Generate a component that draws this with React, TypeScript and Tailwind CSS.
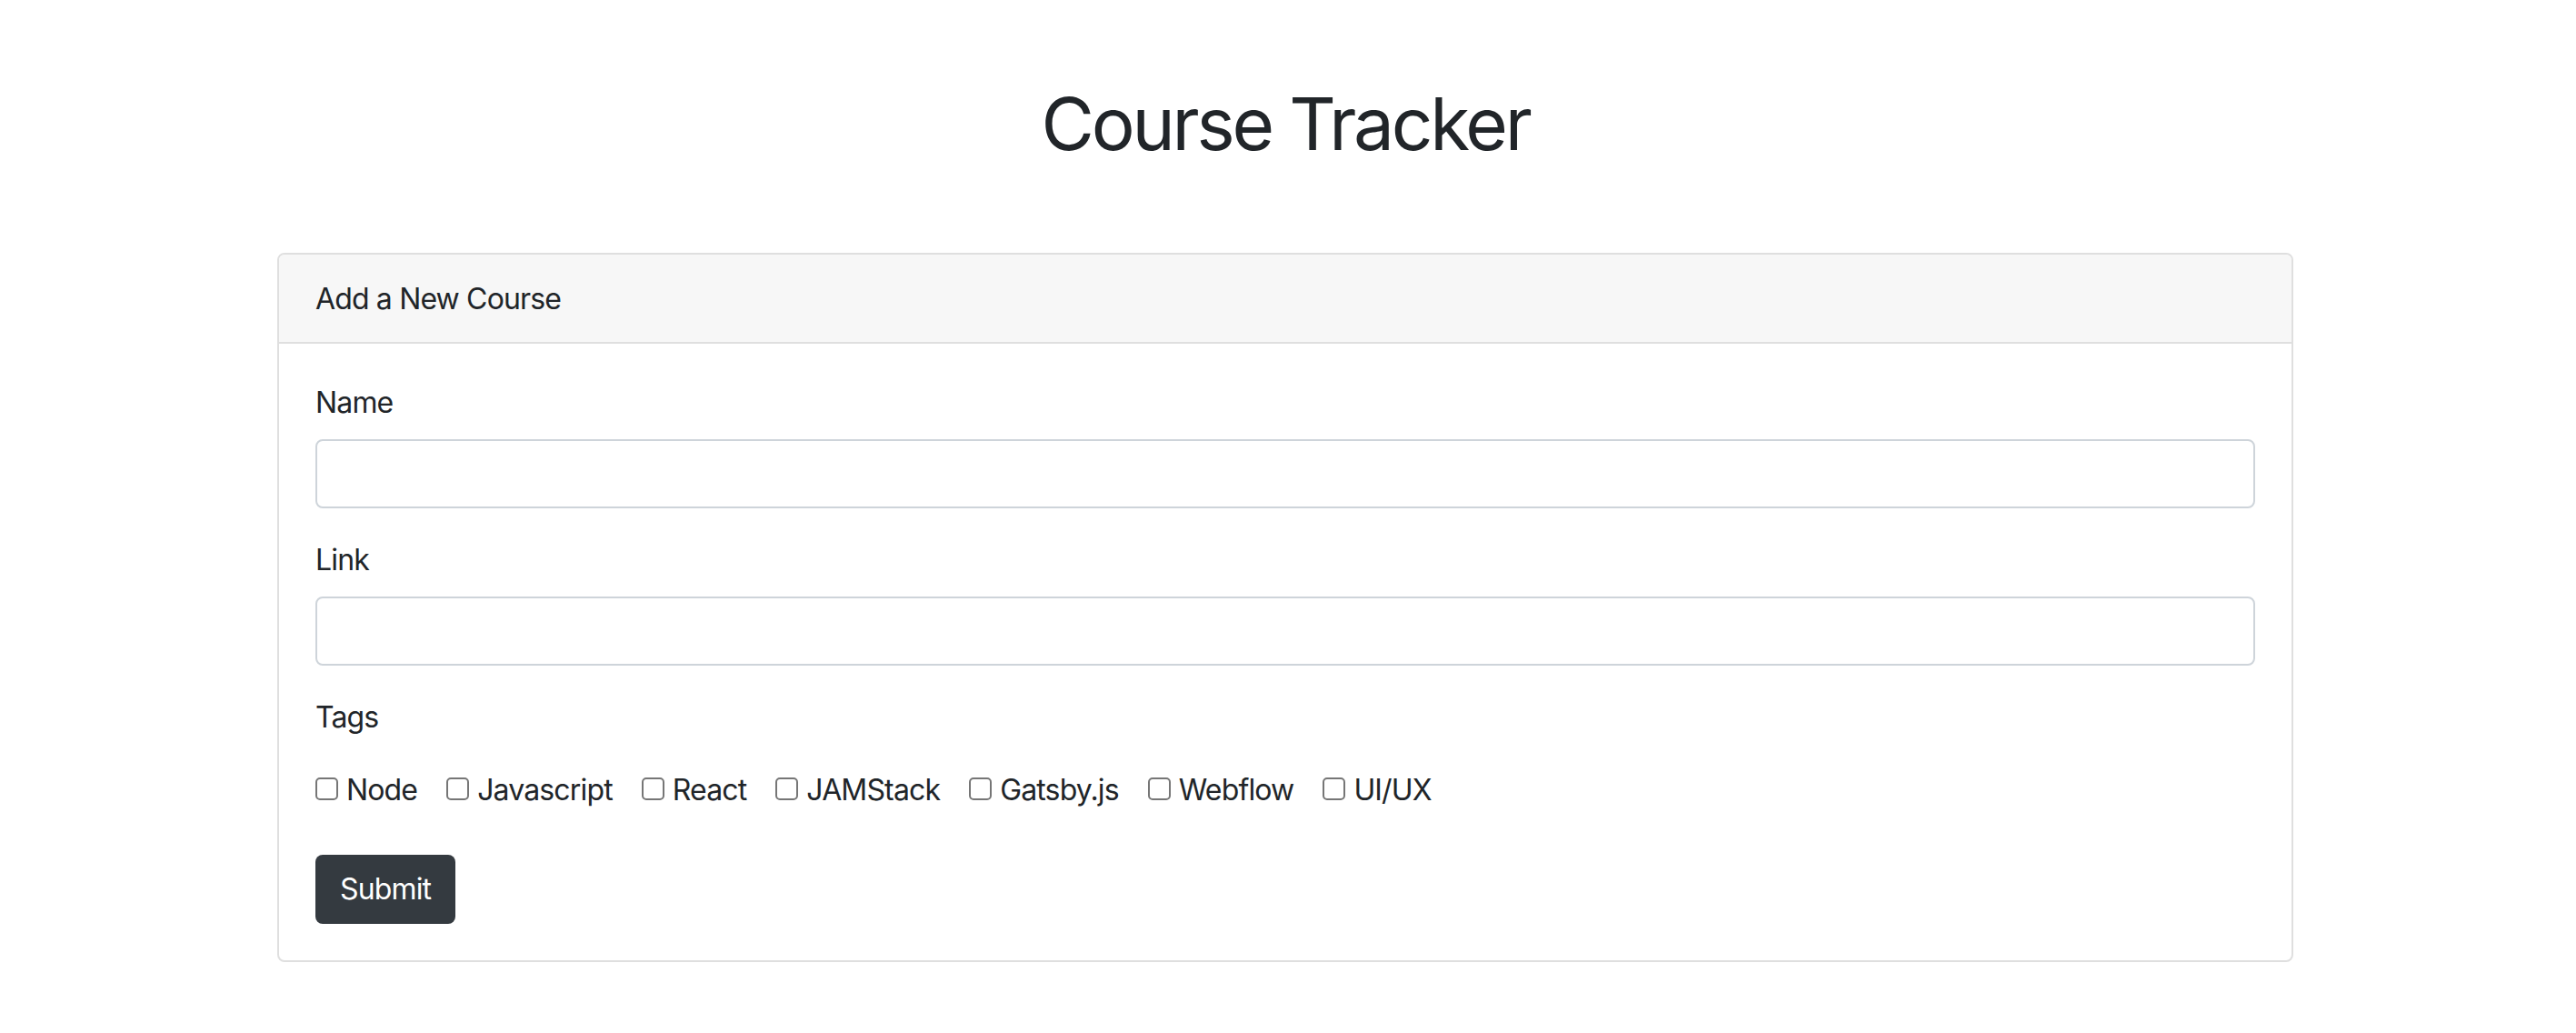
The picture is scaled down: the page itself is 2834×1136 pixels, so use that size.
const tags = ["Node", "Javascript", "React", "JAMStack", "Gatsby.js", "Webflow", "UI/UX"];

function Field({ label }: { label: string }) {
  return (
    <div className="mb-[32px]">
      <label className="block mb-[16px] leading-[48px] pt-[1px] -mb-[1px]">{label}</label>
      <input
        type="text"
        className="block w-full h-[76px] mt-[16px] px-[24px] bg-white border-2 border-[#ced4da] rounded-[8px] outline-none"
      />
    </div>
  );
}

export default function App() {
  return (
    <div
      className="min-h-screen bg-white text-[#212529] pr-[6px] pt-[88px]"
      style={{ fontFamily: "Inter, 'Noto Sans', sans-serif" }}
    >
      <h1 className="text-center text-[80px] leading-[96px] font-normal tracking-[-3.2px]">
        Course Tracker
      </h1>

      <div className="w-[2218px] mx-auto mt-[94px] border-2 border-[#dfdfdf] rounded-[8px] text-[32px] leading-[48px] tracking-[-0.85px]">
        <div className="bg-[#f7f7f7] px-[40px] pt-[25px] pb-[23px] border-b-2 border-[#dfdfdf] rounded-t-[6px]">
          Add a New Course
        </div>

        <form className="p-[40px]">
          <Field label="Name" />
          <Field label="Link" />

          <label className="block leading-[48px] pt-[1px] -mb-[1px]">Tags</label>
          <div className="flex items-baseline mt-[33px]">
            {tags.map((t, i) => (
              <label key={t} className={`flex items-baseline ${i > 0 ? "ml-[32px]" : ""}`}>
                <input
                  type="checkbox"
                  className="appearance-none w-[25px] h-[25px] m-0 mr-[9px] bg-white border-2 border-[#767676] rounded-[5px]"
                />
                <span>{t}</span>
              </label>
            ))}
          </div>

          <button
            type="button"
            className="mt-[47px] h-[76px] px-[27px] bg-[#343a40] text-white rounded-[8px] leading-[48px]"
          >
            Submit
          </button>
        </form>
      </div>
    </div>
  );
}
